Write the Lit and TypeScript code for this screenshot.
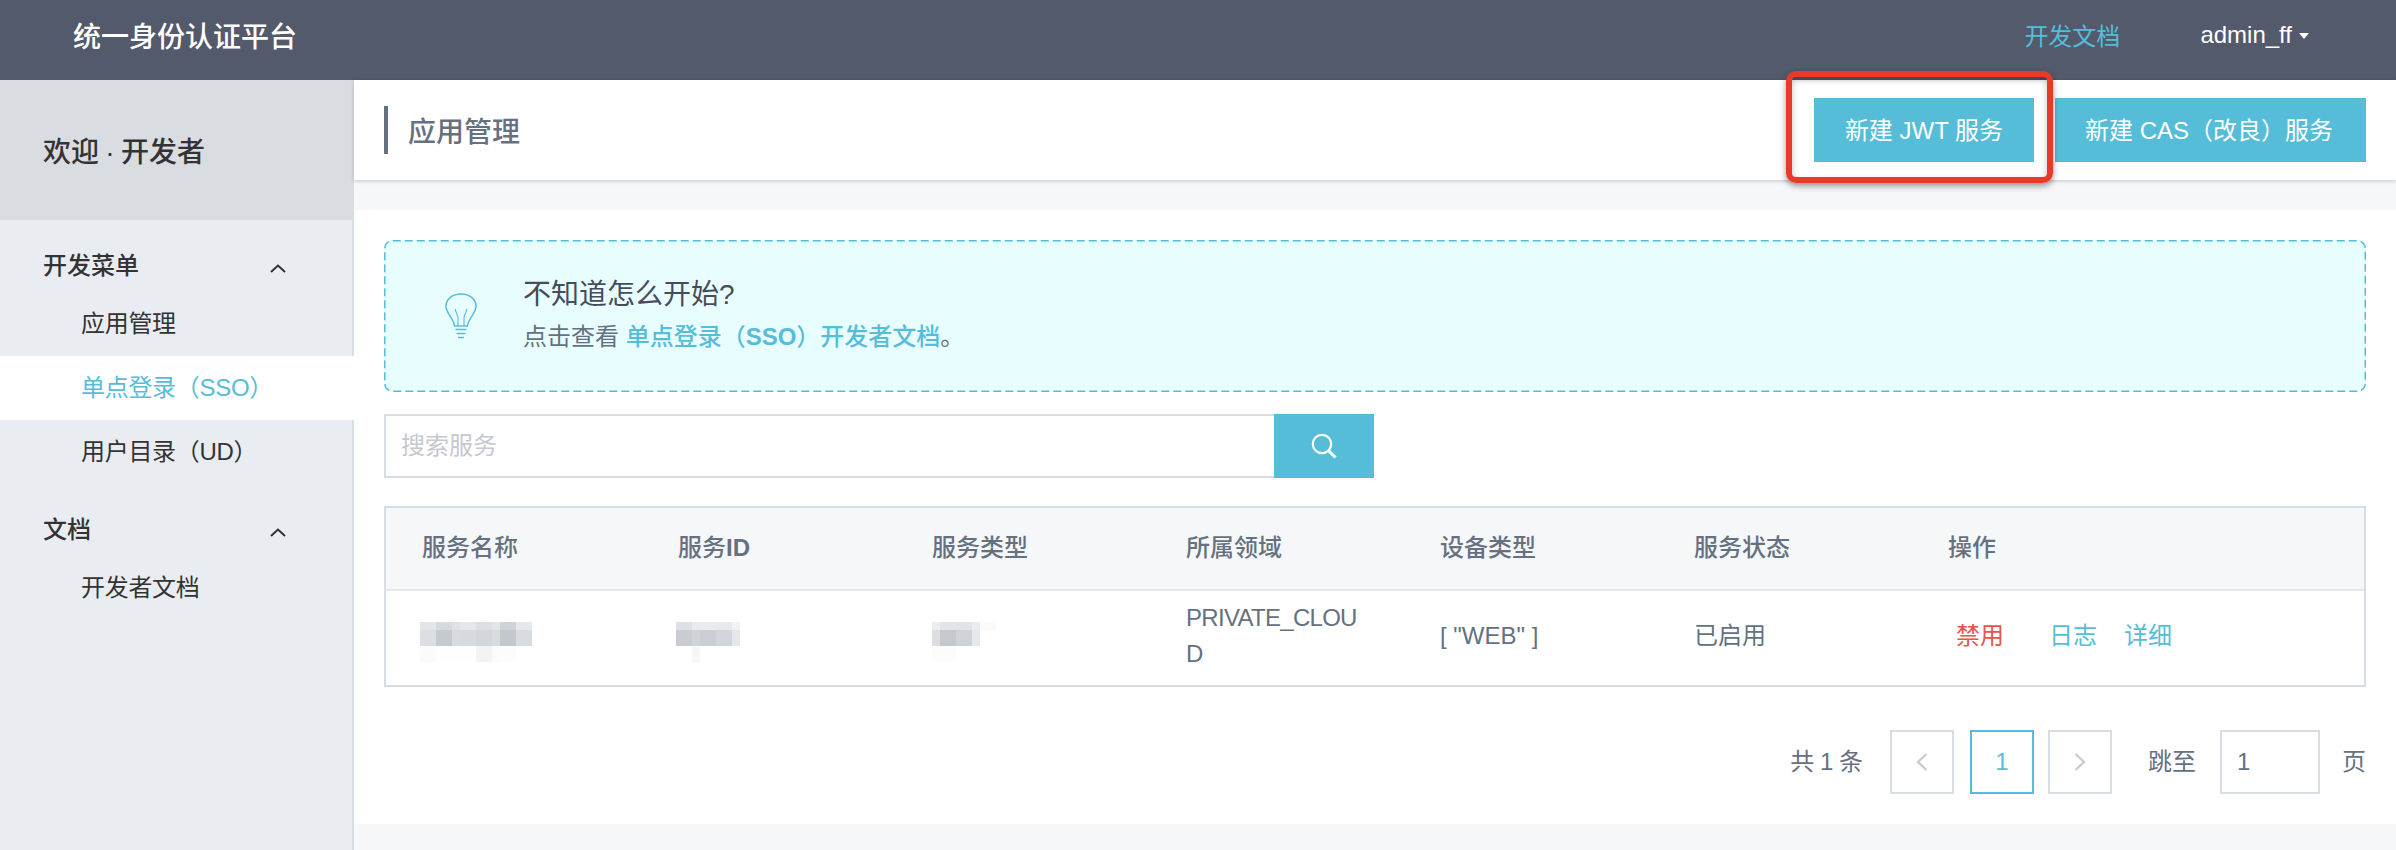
import { LitElement, css, html, svg } from "lit";
import { customElement } from "lit/decorators.js";

// mosaic cells of the blurred table values: widths per column, colours per row
interface Mosaic {
    widths: number[];
    rows: { height: number; colors: string[] }[];
}

const NAME_MOSAIC: Mosaic = {
    widths: [16, 16, 8, 16, 16, 8, 16, 16],
    rows: [
        { height: 8, colors: ["#e3e5e9", "#d6dade", "#dfe1e5", "#e6e7ec", "#dcdee2", "#e3e5e8", "#cfd3d8", "#e6e8ea"] },
        { height: 16, colors: ["#dbdee2", "#c5cacf", "#d8dbe0", "#d6d9dd", "#d3d6db", "#d9dcdf", "#c3c8ce", "#d9dbe0"] },
        { height: 16, colors: ["#fbfbfb", "#fdfefe", "#fefefe", "#fefefe", "#f3f3f3", "#fbfbfb", "#fcfcfc", "#ffffff"] },
    ],
};

const ID_MOSAIC: Mosaic = {
    widths: [16, 8, 16, 16, 8],
    rows: [
        { height: 8, colors: ["#dde0e4", "#e9ebee", "#ebecee", "#e9eaec", "#f3f3f4"] },
        { height: 16, colors: ["#c9cdd2", "#d0d3d8", "#cbcfd4", "#d2d5db", "#e6e7ea"] },
        { height: 16, colors: ["#ffffff", "#f6f6f6", "#ffffff", "#ffffff", "#ffffff"] },
    ],
};

const TYPE_MOSAIC: Mosaic = {
    widths: [8, 16, 16, 8, 16],
    rows: [
        { height: 8, colors: ["#ecedef", "#e2e4e8", "#e1e3e7", "#ebecef", "#fbfbfb"] },
        { height: 16, colors: ["#dcdfe2", "#c5c9ce", "#cfd3d8", "#e6e8eb", "#ffffff"] },
        { height: 16, colors: ["#fcfcfc", "#fcfcfc", "#ffffff", "#ffffff", "#ffffff"] },
    ],
};

const chevronUp = svg`<path d="M1 8 L8 1.5 L15 8" fill="none" stroke="#333" stroke-width="2" />`;

@customElement("app-root")
export class AppRoot extends LitElement {
    renderMosaic(m: Mosaic) {
        return html`<div class="mosaic">
            ${m.rows.map(
                (row) => html`<div class="mosaic-row" style="height:${row.height}px">
                    ${row.colors.map(
                        (c, i) => html`<span style="width:${m.widths[i]}px;background:${c}"></span>`
                    )}
                </div>`
            )}
        </div>`;
    }

    renderGroup(title: string, items: { label: string; active?: boolean }[]) {
        return html`
            <div class="group">
                <div class="group-head">
                    <span>${title}</span>
                    <svg width="16" height="10" viewBox="0 0 16 10">${chevronUp}</svg>
                </div>
                ${items.map(
                    (it) => html`<div class="item ${it.active ? "active" : ""}">${it.label}</div>`
                )}
            </div>
        `;
    }

    render() {
        return html`
            <header class="topbar">
                <div class="brand">统一身份认证平台</div>
                <div class="nav">
                    <a class="doc-link">开发文档</a>
                    <span class="user">admin_ff<i class="caret"></i></span>
                </div>
            </header>
            <div class="body">
                <aside class="sidebar">
                    <div class="welcome">欢迎 · 开发者</div>
                    <div class="menu">
                        ${this.renderGroup("开发菜单", [
                            { label: "应用管理" },
                            { label: "单点登录（SSO）", active: true },
                            { label: "用户目录（UD）" },
                        ])}
                        ${this.renderGroup("文档", [{ label: "开发者文档" }])}
                    </div>
                </aside>
                <main class="main">
                    <div class="page-bar">
                        <h2 class="page-title">应用管理</h2>
                        <div class="actions">
                            <div class="btn-wrap">
                                <button class="btn jwt">新建 JWT 服务</button>
                                <div class="annotation"></div>
                            </div>
                            <button class="btn cas">新建 CAS（改良）服务</button>
                        </div>
                    </div>
                    <section class="content">
                        <div class="notice">
                            <svg class="notice-border"><rect class="notice-dash" x="0.75" y="0.75" rx="8" ry="8" /></svg>
                            <svg class="bulb" width="32" height="46" viewBox="0 0 32 46" fill="none" stroke="#56bdd9" stroke-width="1.5">
                                <path d="M9.5 33 C9 26 1 20 1 13.5 C1 6 7.5 1 16 1 C24.5 1 31 6 31 13.5 C31 20 23 26 22.5 33 Z" />
                                <path d="M13 33 V24 L10 16 M19 33 V24 L22 16" stroke-width="1.1" />
                                <path d="M10.5 36.5 H21.5 M11.5 40.5 H20.5 M13 44.5 H19" />
                            </svg>
                            <div class="notice-text">
                                <div class="notice-title">不知道怎么开始?</div>
                                <div class="notice-sub">点击查看 <a>单点登录（<b>SSO</b>）开发者文档</a>。</div>
                            </div>
                        </div>
                        <div class="search">
                            <div class="search-input">搜索服务</div>
                            <div class="search-btn">
                                <svg width="26" height="26" viewBox="0 0 26 26" fill="none" stroke="#fff">
                                    <circle cx="11" cy="11" r="9.2" stroke-width="2.2" />
                                    <path d="M17.6 17.6 L24.5 24.5" stroke-width="3" />
                                </svg>
                            </div>
                        </div>
                        <div class="table-wrap">
                            <table>
                                <colgroup>
                                    <col class="first" /><col class="c" /><col class="c" /><col class="c" /><col class="c" /><col class="c" /><col />
                                </colgroup>
                                <thead>
                                    <tr>
                                        <th>服务名称</th>
                                        <th>服务<b>ID</b></th>
                                        <th>服务类型</th>
                                        <th>所属领域</th>
                                        <th>设备类型</th>
                                        <th>服务状态</th>
                                        <th>操作</th>
                                    </tr>
                                </thead>
                                <tbody>
                                    <tr>
                                        <td class="blur-name">${this.renderMosaic(NAME_MOSAIC)}</td>
                                        <td class="blur-id">${this.renderMosaic(ID_MOSAIC)}</td>
                                        <td class="blur-type">${this.renderMosaic(TYPE_MOSAIC)}</td>
                                        <td class="txt domain">PRIVATE_CLOUD</td>
                                        <td class="txt">[ "WEB" ]</td>
                                        <td class="txt">已启用</td>
                                        <td class="txt ops">
                                            <a class="danger">禁用</a><a class="log">日志</a><a class="detail">详细</a>
                                        </td>
                                    </tr>
                                </tbody>
                            </table>
                        </div>
                        <div class="pager">
                            <span class="total">共 1 条</span>
                            <span class="page-box prev">
                                <svg width="12" height="18" viewBox="0 0 12 18" fill="none" stroke="#ccc" stroke-width="2.4"><path d="M10.5 1 L2 9 L10.5 17" /></svg>
                            </span>
                            <span class="page-box current">1</span>
                            <span class="page-box next">
                                <svg width="12" height="18" viewBox="0 0 12 18" fill="none" stroke="#ccc" stroke-width="2.4"><path d="M1.5 1 L10 9 L1.5 17" /></svg>
                            </span>
                            <span class="jump">跳至</span>
                            <span class="jump-input">1</span>
                            <span class="unit">页</span>
                        </div>
                    </section>
                </main>
            </div>
        `;
    }

    static styles = css`
        :host {
            display: flex;
            flex-direction: column;
            min-height: 850px;
            font-family: "Liberation Sans", "Noto Sans CJK SC", sans-serif;
            font-size: 24px;
            color: #657180;
            background: #f5f7f9;
        }

        .topbar {
            height: 80px;
            box-sizing: border-box;
            padding: 0 87px 11px 73px;
            display: flex;
            align-items: center;
            justify-content: space-between;
            background: #535a6c;
            color: #fff;
        }

        .brand {
            font-size: 28px;
            font-weight: 500;
        }

        .nav {
            display: flex;
            align-items: center;
            gap: 80px;
        }

        .doc-link {
            color: #56bdd9;
        }

        .user {
            display: flex;
            align-items: center;
            gap: 7px;
        }

        .caret {
            width: 0;
            height: 0;
            margin-top: 3px;
            border-left: 5px solid transparent;
            border-right: 5px solid transparent;
            border-top: 6px solid #fff;
        }

        .body {
            display: flex;
            flex: 1;
        }

        .sidebar {
            width: 354px;
            flex: none;
            background: linear-gradient(to right, #e9edf2 352px, #d7dde4 352px);
            color: #333;
        }

        .welcome {
            height: 140px;
            box-sizing: border-box;
            padding: 0 43px;
            display: flex;
            align-items: center;
            background: #d9dce1;
            font-size: 28px;
            font-weight: 500;
            word-spacing: -1.5px;
        }

        .menu {
            padding-top: 20px;
        }

        .group {
            margin-bottom: 20px;
        }

        .group-head {
            height: 52px;
            box-sizing: border-box;
            padding: 0 68px 6px 43px;
            display: flex;
            align-items: center;
            justify-content: space-between;
            font-weight: 500;
        }

        .group-head svg {
            margin-top: 12px;
        }

        .item {
            height: 64px;
            line-height: 64px;
            padding-left: 81px;
            letter-spacing: -0.3px;
        }

        .item.active {
            background: #fff;
            color: #56bdd9;
        }

        .main {
            flex: 1;
            min-width: 0;
        }

        .page-bar {
            height: 100px;
            box-sizing: border-box;
            padding: 0 30px;
            display: flex;
            align-items: center;
            justify-content: space-between;
            background: #fff;
            box-shadow: 0 1px 4px rgba(0, 0, 0, 0.2);
            position: relative;
        }

        .page-title {
            margin: 0;
            height: 48px;
            line-height: 54px;
            padding-left: 20px;
            border-left: 4px solid #657180;
            font-size: 28px;
            font-weight: 500;
        }

        .actions {
            display: flex;
            gap: 21px;
        }

        .btn-wrap {
            position: relative;
        }

        .btn {
            display: block;
            height: 64px;
            border: none;
            background: #56bdd9;
            color: #fff;
            font: inherit;
        }

        .btn.jwt {
            width: 220px;
            padding: 0 0 3px;
        }

        .btn.cas {
            padding: 0 33px 3px 30px;
        }

        .annotation {
            position: absolute;
            inset: -27px -19px -21px -28px;
            box-sizing: border-box;
            border: 6px solid #e8392a;
            border-radius: 10px;
            box-shadow: 0 3px 6px rgba(0, 0, 0, 0.4), inset 0 3px 6px rgba(0, 0, 0, 0.25);
        }

        .content {
            margin-top: 30px;
            height: 614px;
            box-sizing: border-box;
            padding: 30px 30px 0;
            background: #fff;
        }

        .notice {
            position: relative;
            height: 152px;
            box-sizing: border-box;
            padding-left: 61px;
            display: flex;
            align-items: center;
            gap: 46px;
            border-radius: 8px;
            background: #e8fdfe;
        }

        .notice-border {
            position: absolute;
            inset: 0;
            width: 100%;
            height: 100%;
        }

        .notice-dash {
            width: calc(100% - 1.5px);
            height: calc(100% - 1.5px);
            fill: none;
            stroke: #56bdd9;
            stroke-width: 1.5;
            stroke-dasharray: 8 4;
        }

        .bulb {
            flex: none;
        }

        .notice-text {
            padding-top: 2px;
        }

        .notice-title {
            font-size: 28px;
            line-height: 40px;
            color: #464c5b;
        }

        .notice-sub {
            line-height: 44px;
        }

        .notice-sub a {
            color: #56bdd9;
            font-weight: 500;
        }

        .search {
            margin-top: 22px;
            width: 990px;
            height: 64px;
            display: flex;
        }

        .search-input {
            flex: 1;
            box-sizing: border-box;
            padding-left: 15px;
            line-height: 60px;
            border: 2px solid #d7dde4;
            border-right: none;
            color: #c5c8ce;
        }

        .search-btn {
            width: 100px;
            display: flex;
            align-items: center;
            justify-content: center;
            background: #56bdd9;
        }

        .table-wrap {
            margin-top: 28px;
            border: 2px solid #d7dde4;
        }

        table {
            width: 100%;
            table-layout: fixed;
            border-collapse: collapse;
        }

        col.first {
            width: 256px;
        }

        col.c {
            width: 254px;
        }

        th {
            height: 82px;
            box-sizing: border-box;
            padding: 0 36px 7px;
            text-align: left;
            font-weight: 500;
            background: #f5f7f9;
            border-bottom: 2px solid #e3e8ee;
        }

        td {
            height: 95px;
            box-sizing: border-box;
            padding: 0 36px;
            line-height: 36px;
        }

        td.txt {
            padding-bottom: 4px;
        }

        td.blur-name {
            padding-left: 34px;
        }

        td.blur-id {
            padding-left: 34px;
        }

        td.blur-type {
            padding-left: 36px;
        }

        .mosaic {
            margin-top: 8px;
        }

        .domain {
            word-break: break-all;
            letter-spacing: -0.7px;
        }

        td.ops {
            padding-left: 44px;
            white-space: nowrap;
        }

        .ops a {
            color: #56bdd9;
        }

        .ops .danger {
            color: #e8534a;
        }

        .ops .log {
            margin-left: 45px;
        }

        .ops .detail {
            margin-left: 27px;
        }

        .mosaic-row {
            display: flex;
        }

        .mosaic-row span {
            display: block;
            height: 100%;
        }

        .pager {
            margin-top: 43px;
            display: flex;
            align-items: center;
            justify-content: flex-end;
        }

        .page-box,
        .jump-input {
            height: 64px;
            box-sizing: border-box;
            display: flex;
            align-items: center;
            border: 2px solid #d7dde4;
        }

        .page-box {
            width: 64px;
            justify-content: center;
        }

        .total,
        .jump,
        .unit {
            padding-bottom: 6px;
        }

        .total {
            margin-right: 27px;
            word-spacing: -1px;
        }

        .current {
            margin: 0 14px 0 16px;
            border-color: #56bdd9;
            color: #56bdd9;
        }

        .jump {
            margin: 0 24px 0 36px;
        }

        .jump-input {
            width: 100px;
            padding-left: 15px;
        }

        .unit {
            margin-left: 22px;
        }
    `;
}
